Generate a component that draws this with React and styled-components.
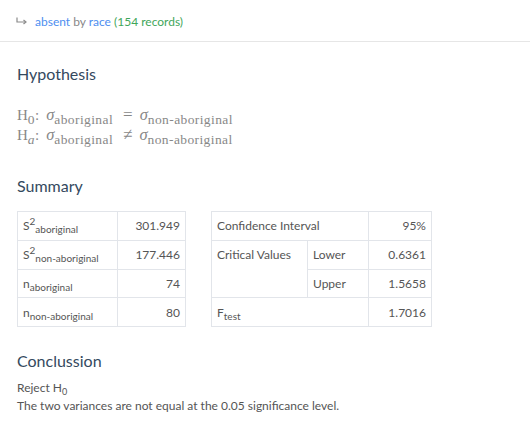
import styled, { createGlobalStyle } from "styled-components";

const GlobalStyle = createGlobalStyle`
  html, body {
    margin: 0;
    padding: 0;
    background: #fff;
  }
  body {
    font-family: Lato, "Noto Sans", sans-serif;
    font-size: 12px;
    color: #555;
  }
`

const Page = styled.div`
  width: 530px;
`

const TopBar = styled.div`
  height: 42px;
  box-sizing: border-box;
  border-bottom: 1px solid #e6e6e6;
  display: flex;
  align-items: center;
  padding: 1px 0 0 16px;
  gap: 8px;
  color: #888;
  font-size: 12px;
`

const Link = styled.span`
  color: #4d8ef0;
`

const Count = styled.span`
  color: #3fa65a;
`

const Body = styled.div`
  padding: 0 17px;
`

const Heading = styled.h2`
  margin: ${(p) => p.top}px 0 0;
  font-size: 16px;
  line-height: 22px;
  font-weight: 400;
  color: #34495e;
`

const MathBlock = styled.div`
  margin-top: 20px;
  font-family: "Liberation Serif", "DejaVu Serif", serif;
  font-size: 15px;
  color: #888;
`

const MathLine = styled.div`
  height: 20px;
  line-height: 20px;
  white-space: nowrap;
`

const Sigma = styled.i`
  font-size: 16.5px;
  margin-left: ${(p) => p.gap || 0}px;
`

const MSub = styled.sub`
  font-size: 13.5px;
  letter-spacing: 0.4px;
  vertical-align: -4px;
  line-height: 0;
`

const Op = styled.span`
  font-size: 17px;
  margin: 0 7px 0 10px;
`

const Tables = styled.div`
  margin-top: 14px;
  display: flex;
  align-items: flex-start;
  gap: 25px;
`

const Table = styled.table`
  border-collapse: collapse;
  width: ${(p) => p.w}px;
  table-layout: fixed;
  color: #555;
`

const Cell = styled.td`
  border: 1px solid #e2e5ea;
  height: 28.75px;
  padding: 0 5px;
  box-sizing: border-box;
  text-align: ${(p) => (p.right ? "right" : "left")};
  vertical-align: ${(p) => (p.top ? "top" : "middle")};
  line-height: ${(p) => (p.top ? "27px" : "normal")};
  white-space: nowrap;
`

const Sup = styled.sup`
  font-size: 10px;
  vertical-align: 5px;
  line-height: 0;
`

const Sub = styled.sub`
  font-size: ${(p) => p.size || 10}px;
  vertical-align: -3px;
  line-height: 0;
`

const Text = styled.p`
  margin: ${(p) => p.top || 0}px 0 0;
  line-height: 18px;
  color: #555;
`

function HookArrow() {
  return (
    <svg width="11" height="8" viewBox="0 0 11 8" fill="none" stroke="#8a8a8a" strokeWidth="1.2">
      <path d="M1 0.5V5H9.5" />
      <path d="M7.5 3L10 5L7.5 7" />
    </svg>
  )
}

function Label({ base, sup, sub }) {
  return (
    <span>
      {base}
      {sup && <Sup>{sup}</Sup>}
      <Sub>{sub}</Sub>
    </span>
  )
}

export default function App() {
  return (
    <Page>
      <GlobalStyle />
      <TopBar>
        <HookArrow />
        <span>
          <Link>absent</Link> by <Link>race</Link> <Count>(154 records)</Count>
        </span>
      </TopBar>
      <Body>
        <Heading top={21}>Hypothesis</Heading>
        <MathBlock>
          <MathLine>
            H<MSub>0</MSub>:<Sigma gap={7}>σ</Sigma>
            <MSub>aboriginal</MSub>
            <Op>=</Op>
            <Sigma>σ</Sigma>
            <MSub>non-aboriginal</MSub>
          </MathLine>
          <MathLine>
            H<MSub><i>a</i></MSub>:<Sigma gap={7}>σ</Sigma>
            <MSub>aboriginal</MSub>
            <Op>≠</Op>
            <Sigma>σ</Sigma>
            <MSub>non-aboriginal</MSub>
          </MathLine>
        </MathBlock>

        <Heading top={30}>Summary</Heading>
        <Tables>
          <Table w={169}>
            <colgroup>
              <col style={{ width: 100 }} />
              <col />
            </colgroup>
            <tbody>
              <tr>
                <Cell><Label base="S" sup="2" sub="aboriginal" /></Cell>
                <Cell right>301.949</Cell>
              </tr>
              <tr>
                <Cell><Label base="S" sup="2" sub="non-aboriginal" /></Cell>
                <Cell right>177.446</Cell>
              </tr>
              <tr>
                <Cell><Label base="n" sub="aboriginal" /></Cell>
                <Cell right>74</Cell>
              </tr>
              <tr>
                <Cell><Label base="n" sub="non-aboriginal" /></Cell>
                <Cell right>80</Cell>
              </tr>
            </tbody>
          </Table>

          <Table w={221}>
            <colgroup>
              <col style={{ width: 96 }} />
              <col style={{ width: 61 }} />
              <col />
            </colgroup>
            <tbody>
              <tr>
                <Cell colSpan={2}>Confidence Interval</Cell>
                <Cell right>95%</Cell>
              </tr>
              <tr>
                <Cell rowSpan={2} top>Critical Values</Cell>
                <Cell>Lower</Cell>
                <Cell right>0.6361</Cell>
              </tr>
              <tr>
                <Cell>Upper</Cell>
                <Cell right>1.5658</Cell>
              </tr>
              <tr>
                <Cell colSpan={2}><Label base="F" sub="test" /></Cell>
                <Cell right>1.7016</Cell>
              </tr>
            </tbody>
          </Table>
        </Tables>

        <Heading top={23}>Conclussion</Heading>
        <Text top={7}>
          Reject H<Sub size={9}>0</Sub>
        </Text>
        <Text>The two variances are not equal at the 0.05 significance level.</Text>
      </Body>
    </Page>
  )
}
